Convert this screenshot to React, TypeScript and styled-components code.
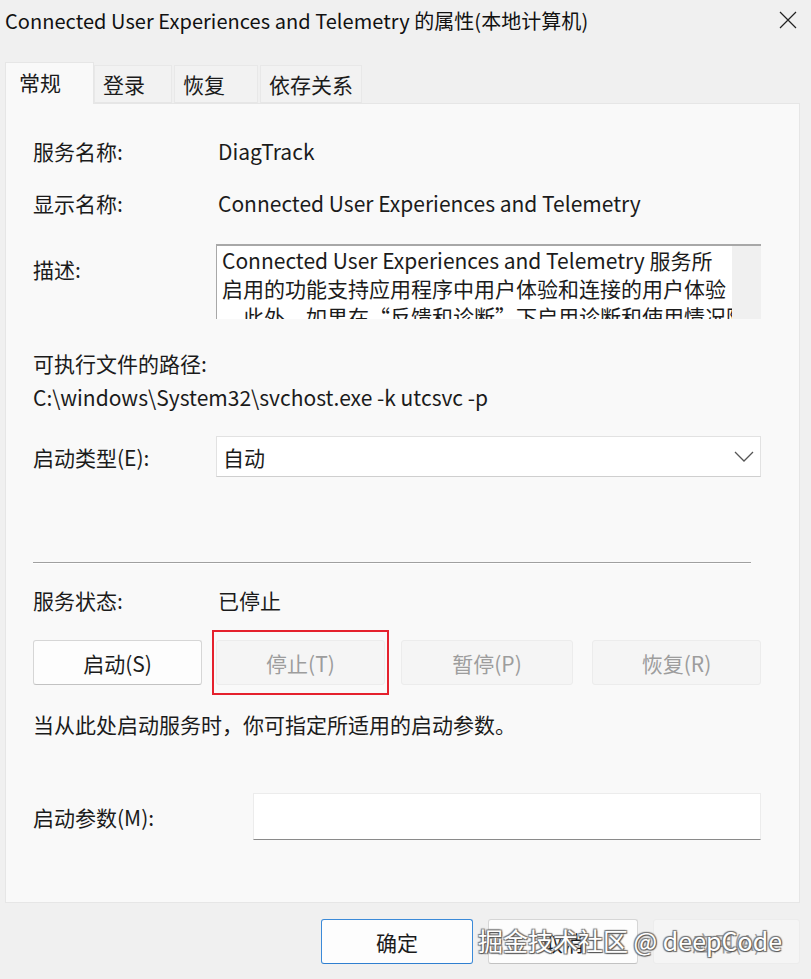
import React from "react";
import styled, { createGlobalStyle } from "styled-components";

const Global = createGlobalStyle`
  html, body { margin: 0; padding: 0; background: #f0f0f0; }
  body { font-family: "Noto Sans CJK SC", "Noto Sans", sans-serif; color: #1b1b1b; }
  * { box-sizing: border-box; }
`;

const Window = styled.div`
  width: 811px;
  height: 979px;
  background: #f0f0f0;
  display: flex;
  flex-direction: column;
  position: relative;
  overflow: hidden;
`;

const TitleBar = styled.div`
  height: 40px;
  display: flex;
  align-items: center;
  justify-content: space-between;
  padding: 0 14px 0 5px;
`;

const Title = styled.div`
  font-size: 20px;
  letter-spacing: 0.05px;
  color: #111;
  white-space: nowrap;
`;

const CloseIcon = styled.svg`
  width: 18px;
  height: 18px;
`;

const TabRow = styled.div`
  display: flex;
  align-items: flex-end;
  margin: 21px 0 0 5px;
  height: 42px;
  position: relative;
  z-index: 2;
`;

const Tab = styled.div<{ $active?: boolean; $w: number }>`
  width: ${(p) => p.$w}px;
  height: ${(p) => (p.$active ? 42 : 38)}px;
  margin-right: ${(p) => (p.$active ? 0 : 2)}px;
  background: ${(p) => (p.$active ? "#f9f9f9" : "#f2f2f2")};
  border: 1px solid ${(p) => (p.$active ? "#e6e6e6" : "#e8e8e8")};
  border-bottom: ${(p) => (p.$active ? "none" : "1px solid #e6e6e6")};
  font-size: 21px;
  display: flex;
  align-items: center;
  padding-left: ${(p) => (p.$active ? 13 : 8)}px;
  padding-bottom: ${(p) => (p.$active ? 4 : 0)}px;
  margin-bottom: ${(p) => (p.$active ? -1 : 0)}px;
`;

const Panel = styled.div`
  margin: 0 11px 0 5px;
  height: 800px;
  background: #f9f9f9;
  border: 1px solid #e6e6e6;
  padding: 33px 38px 0 27px;
  display: flex;
  flex-direction: column;
  font-size: 21px;
  line-height: 28px;
`;

const Row = styled.div<{ $mt?: number }>`
  display: flex;
  align-items: center;
  margin-top: ${(p) => p.$mt ?? 0}px;
`;

const TopRow = styled(Row)`
  align-items: flex-start;
`;

const Label = styled.div<{ $w?: number; $pt?: number }>`
  width: ${(p) => p.$w ?? 183}px;
  flex-shrink: 0;
  padding-top: ${(p) => p.$pt ?? 0}px;
  white-space: nowrap;
`;

const Value = styled.div`
  padding-left: 2px;
  white-space: nowrap;
`;

const Text = styled.div<{ $mt?: number }>`
  margin-top: ${(p) => p.$mt ?? 0}px;
  white-space: nowrap;
`;

const DescBox = styled.div`
  flex: 1;
  height: 75px;
  margin-top: 2px;
  background: #fff;
  border-top: 2px solid #a8a8a8;
  border-left: 1px solid #a8a8a8;
  display: flex;
  overflow: hidden;
`;

const DescText = styled.div`
  flex: 1;
  padding: 0 0 0 5px;
  line-height: 28px;
  white-space: nowrap;
  overflow: hidden;
`;

const ScrollTrack = styled.div`
  width: 29px;
  flex-shrink: 0;
  background: #f0f0f0;
`;

const Select = styled.div`
  flex: 1;
  height: 41px;
  background: #fff;
  border: 1px solid #e2e2e2;
  border-bottom-color: #cfcfcf;
  display: flex;
  align-items: center;
  justify-content: space-between;
  padding: 0 6px 0 6px;
`;

const Chevron = styled.svg`
  width: 20px;
  height: 12px;
`;

const Separator = styled.div`
  margin-top: 85px;
  margin-right: 10px;
  height: 2px;
  border-top: 1px solid #a0a0a0;
  border-bottom: 1px solid #ffffff;
`;

const ButtonRow = styled.div`
  display: flex;
  margin-top: 26px;
  align-items: center;
`;

const Button = styled.div<{ $w: number; $disabled?: boolean; $mr?: number; $focused?: boolean }>`
  width: ${(p) => p.$w}px;
  height: 45px;
  margin-right: ${(p) => p.$mr ?? 0}px;
  flex-shrink: 0;
  display: flex;
  align-items: center;
  justify-content: center;
  font-size: 21px;
  background: ${(p) => (p.$disabled ? "#f5f5f5" : "#fdfdfd")};
  color: ${(p) => (p.$disabled ? "#9d9d9d" : "#1b1b1b")};
  border: 1px solid ${(p) => (p.$focused ? "#3b8ad8" : p.$disabled ? "#ececec" : "#d6d6d6")};
  border-bottom-color: ${(p) => (p.$focused ? "#2f7fd0" : p.$disabled ? "#ececec" : "#c2c2c2")};
  border-radius: 3px;
`;

const Highlight = styled.div`
  position: relative;
  width: 169px;
  height: 45px;
  margin-right: 16px;
  flex-shrink: 0;
`;

const RedBox = styled.div`
  position: absolute;
  left: -4px;
  top: -10px;
  width: 177px;
  height: 65px;
  border: 2px solid #e5212d;
  pointer-events: none;
`;

const ParamInput = styled.div`
  flex: 1;
  height: 47px;
  background: #fff;
  border: 1px solid #ececec;
  border-bottom: 1px solid #8a8a8a;
`;

const Footer = styled.div`
  display: flex;
  justify-content: flex-end;
  gap: 15px;
  padding: 16px 11px 0 0;
`;

const Watermark = styled.div`
  position: absolute;
  left: 478px;
  top: 922px;
  font-size: 25px;
  line-height: 36px;
  color: #ffffff;
  white-space: nowrap;
  text-shadow: 1px 1px 1px #555, -1px -1px 1px #777, 1px -1px 1px #777, -1px 1px 1px #777;
  pointer-events: none;
`;

export default function App() {
  return (
    <Window>
      <Global />
      <TitleBar>
        <Title>Connected User Experiences and Telemetry 的属性(本地计算机)</Title>
        <CloseIcon viewBox="0 0 18 18">
          <path d="M1 1 L17 17 M17 1 L1 17" stroke="#222" strokeWidth="1.2" fill="none" />
        </CloseIcon>
      </TitleBar>
      <TabRow>
        <Tab $active $w={89}>常规</Tab>
        <Tab $w={78}>登录</Tab>
        <Tab $w={84}>恢复</Tab>
        <Tab $w={102}>依存关系</Tab>
      </TabRow>
      <Panel>
        <Row>
          <Label>服务名称:</Label>
          <Value>DiagTrack</Value>
        </Row>
        <Row $mt={24}>
          <Label>显示名称:</Label>
          <Value>Connected User Experiences and Telemetry</Value>
        </Row>
        <TopRow $mt={25}>
          <Label $pt={13}>描述:</Label>
          <DescBox>
            <DescText>
              Connected User Experiences and Telemetry 服务所
              <br />
              启用的功能支持应用程序中用户体验和连接的用户体验
              <br />
              。此外，如果在“反馈和诊断”下启用诊断和使用情况隐
            </DescText>
            <ScrollTrack />
          </DescBox>
        </TopRow>
        <Text $mt={30}>可执行文件的路径:</Text>
        <Text $mt={6}>C:\windows\System32\svchost.exe -k utcsvc -p</Text>
        <Row $mt={25}>
          <Label>启动类型(E):</Label>
          <Select>
            <span>自动</span>
            <Chevron viewBox="0 0 20 12">
              <polyline points="1,1 10,10 19,1" stroke="#555" strokeWidth="1.3" fill="none" />
            </Chevron>
          </Select>
        </Row>
        <Separator />
        <Row $mt={22}>
          <Label>服务状态:</Label>
          <Value>已停止</Value>
        </Row>
        <ButtonRow>
          <Button $w={169} $mr={14}>启动(S)</Button>
          <Highlight>
            <Button $w={169} $disabled>停止(T)</Button>
            <RedBox />
          </Highlight>
          <Button $w={172} $mr={19} $disabled>暂停(P)</Button>
          <Button $w={169} $disabled>恢复(R)</Button>
        </ButtonRow>
        <Text $mt={25}>当从此处启动服务时，你可指定所适用的启动参数。</Text>
        <Row $mt={55}>
          <Label $w={220}>启动参数(M):</Label>
          <ParamInput />
        </Row>
      </Panel>
      <Footer>
        <Button $w={152} $focused>确定</Button>
        <Button $w={150}>取消</Button>
        <Button $w={147} $disabled>应用(A)</Button>
      </Footer>
      <Watermark>掘金技术社区 @ deepCode</Watermark>
    </Window>
  );
}
